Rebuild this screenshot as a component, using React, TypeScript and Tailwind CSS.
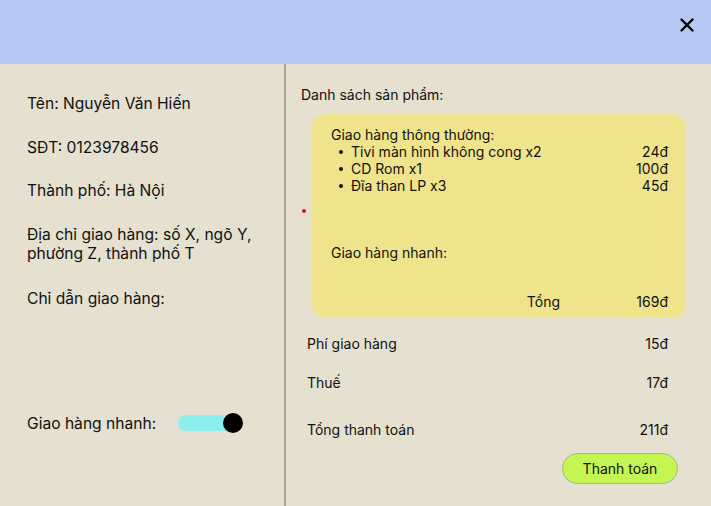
import { X } from 'lucide-react'

const items = [
  { name: 'Tivi màn hình không cong x2', price: '24đ' },
  { name: 'CD Rom x1', price: '100đ' },
  { name: 'Đĩa than LP x3', price: '45đ' },
]

const summary = [
  { label: 'Phí giao hàng', value: '15đ', mt: 'mt-[17px]' },
  { label: 'Thuế', value: '17đ', mt: 'mt-[22px]' },
  { label: 'Tổng thanh toán', value: '211đ', mt: 'mt-[30px]' },
]

export default function App() {
  return (
    <div
      className="w-[711px] h-[506px] bg-[#e5e0cf] text-[#111] flex flex-col overflow-hidden"
      style={{ fontFamily: 'Inter, "Noto Sans", sans-serif' }}
    >
      <div className="h-16 bg-[#b4c8f3] flex items-start justify-end pr-[13px] pt-[14px]">
        <X size={22} strokeWidth={2.6} className="text-black" />
      </div>

      <div className="flex flex-1 relative">
        {/* customer info */}
        <div className="w-[284px] pl-[27px] pt-[30px] text-[15.6px] leading-[19px]">
          <div>Tên: Nguyễn Văn Hiến</div>
          <div className="mt-[25px]">SĐT: 0123978456</div>
          <div className="mt-[24px]">Thành phố: Hà Nội</div>
          <div className="mt-[25px]">
            Địa chỉ giao hàng: số X, ngõ Y,
            <br />
            phường Z, thành phố T
          </div>
          <div className="mt-[26px]">Chỉ dẫn giao hàng:</div>
          <div className="mt-[105px] flex items-center">
            <span>Giao hàng nhanh:</span>
            <div className="ml-[22px] relative w-[65px] h-5 flex items-center">
              <div className="w-[58px] h-4 rounded-full bg-[#8eeeee]" />
              <div className="absolute right-0 top-0 w-5 h-5 rounded-full bg-black" />
            </div>
          </div>
        </div>

        <div className="w-[2px] bg-[#a8a498]" />

        {/* order */}
        <div className="flex-1 text-[14px] leading-[17px] pr-[25px]">
          <div className="pl-[15px] pt-[22px]">Danh sách sản phẩm:</div>
          <div className="ml-[26px] mt-[11px] h-[204px] rounded-[14px] bg-[#efe48c] pl-[19px] pr-[18px] pt-[12px] pb-[8px] flex flex-col">
            <div>Giao hàng thông thường:</div>
            <ul>
              {items.map((it) => (
                <li key={it.name} className="flex justify-between">
                  <span className="flex items-center">
                    <span className="w-[4px] h-[4px] rounded-full bg-[#111] ml-[8px] mr-[8px]" />
                    {it.name}
                  </span>
                  <span>{it.price}</span>
                </li>
              ))}
            </ul>
            <div className="mt-[50px]">Giao hàng nhanh:</div>
            <div className="mt-auto flex justify-end">
              <span>Tổng</span>
              <span className="w-[108px] text-right">169đ</span>
            </div>
          </div>

          <div className="pl-[21px] pr-[18px]">
            {summary.map((s) => (
              <div key={s.label} className={`${s.mt} flex justify-between`}>
                <span>{s.label}</span>
                <span>{s.value}</span>
              </div>
            ))}
          </div>
          <div className="flex justify-end mt-[15px] mr-[8px]">
            <button className="w-[116px] h-[31px] rounded-full bg-[#c5f551] border border-[#a9b88a] text-[14px]">
              Thanh toán
            </button>
          </div>
        </div>

        <div className="absolute left-[302px] top-[145px] w-1 h-1 rounded-full bg-[#e8141a]" />
      </div>
    </div>
  )
}
